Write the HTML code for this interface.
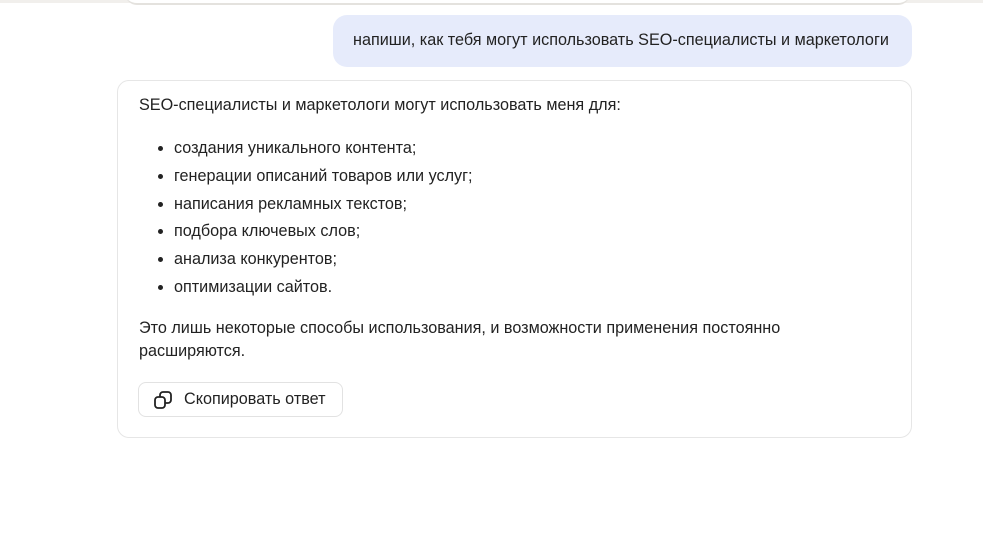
<!DOCTYPE html>
<html><head><meta charset="utf-8"><style>
body{margin:0;width:983px;height:541px;background:#fff;font-family:"Liberation Sans",sans-serif;color:#222;overflow:hidden;position:relative;font-size:16.2px}
.top{position:absolute;left:125px;top:-10px;width:785px;height:13px;border-radius:0 0 12px 12px;background:#fff;border-bottom:2px solid #e4e2de}
.topbg{position:absolute;left:0;top:0;width:983px;height:3px;background:#f1efec}
.user{position:absolute;left:333px;top:15px;width:579px;height:52px;background:#e6ebfb;border-radius:14px;box-sizing:border-box;padding:0 0 0 20px;line-height:50px}
.card{position:absolute;left:117px;top:80px;width:795px;height:358px;box-sizing:border-box;border:1px solid #e6e6e6;border-radius:12px}
.p{position:absolute;left:21px;white-space:nowrap}
ul{position:absolute;left:21px;top:54px;margin:0;padding:0 0 0 35px;line-height:27.8px}
.btn{position:absolute;left:20px;top:301px;width:205px;height:35px;box-sizing:border-box;border:1px solid #e2e2e2;border-radius:8px;line-height:33px;padding-left:45px;font-size:16.2px}
</style></head><body>
<div class="topbg"></div><div class="top"></div>
<div class="user">напиши, как тебя могут использовать SEO-специалисты и маркетологи</div>
<div class="card">
<div class="p" style="top:15px">SEO-специалисты и маркетологи могут использовать меня для:</div>
<ul><li>создания уникального контента;</li><li>генерации описаний товаров или услуг;</li><li>написания рекламных текстов;</li><li>подбора ключевых слов;</li><li>анализа конкурентов;</li><li>оптимизации сайтов.</li></ul>
<div class="p" style="top:236px;line-height:23px">Это лишь некоторые способы использования, и возможности применения постоянно<br>расширяются.</div>
<div class="btn"><svg style="position:absolute;left:15px;top:8px" width="19" height="18" viewBox="0 0 19 18" fill="none" stroke="#222" stroke-width="1.8"><rect x="1" y="6" width="10" height="11" rx="3"/><path d="M6 6V4a3 3 0 0 1 3-3h5a3 3 0 0 1 3 3v5a3 3 0 0 1-3 3h-3"/></svg>Скопировать ответ</div>
</div>
</body></html>
